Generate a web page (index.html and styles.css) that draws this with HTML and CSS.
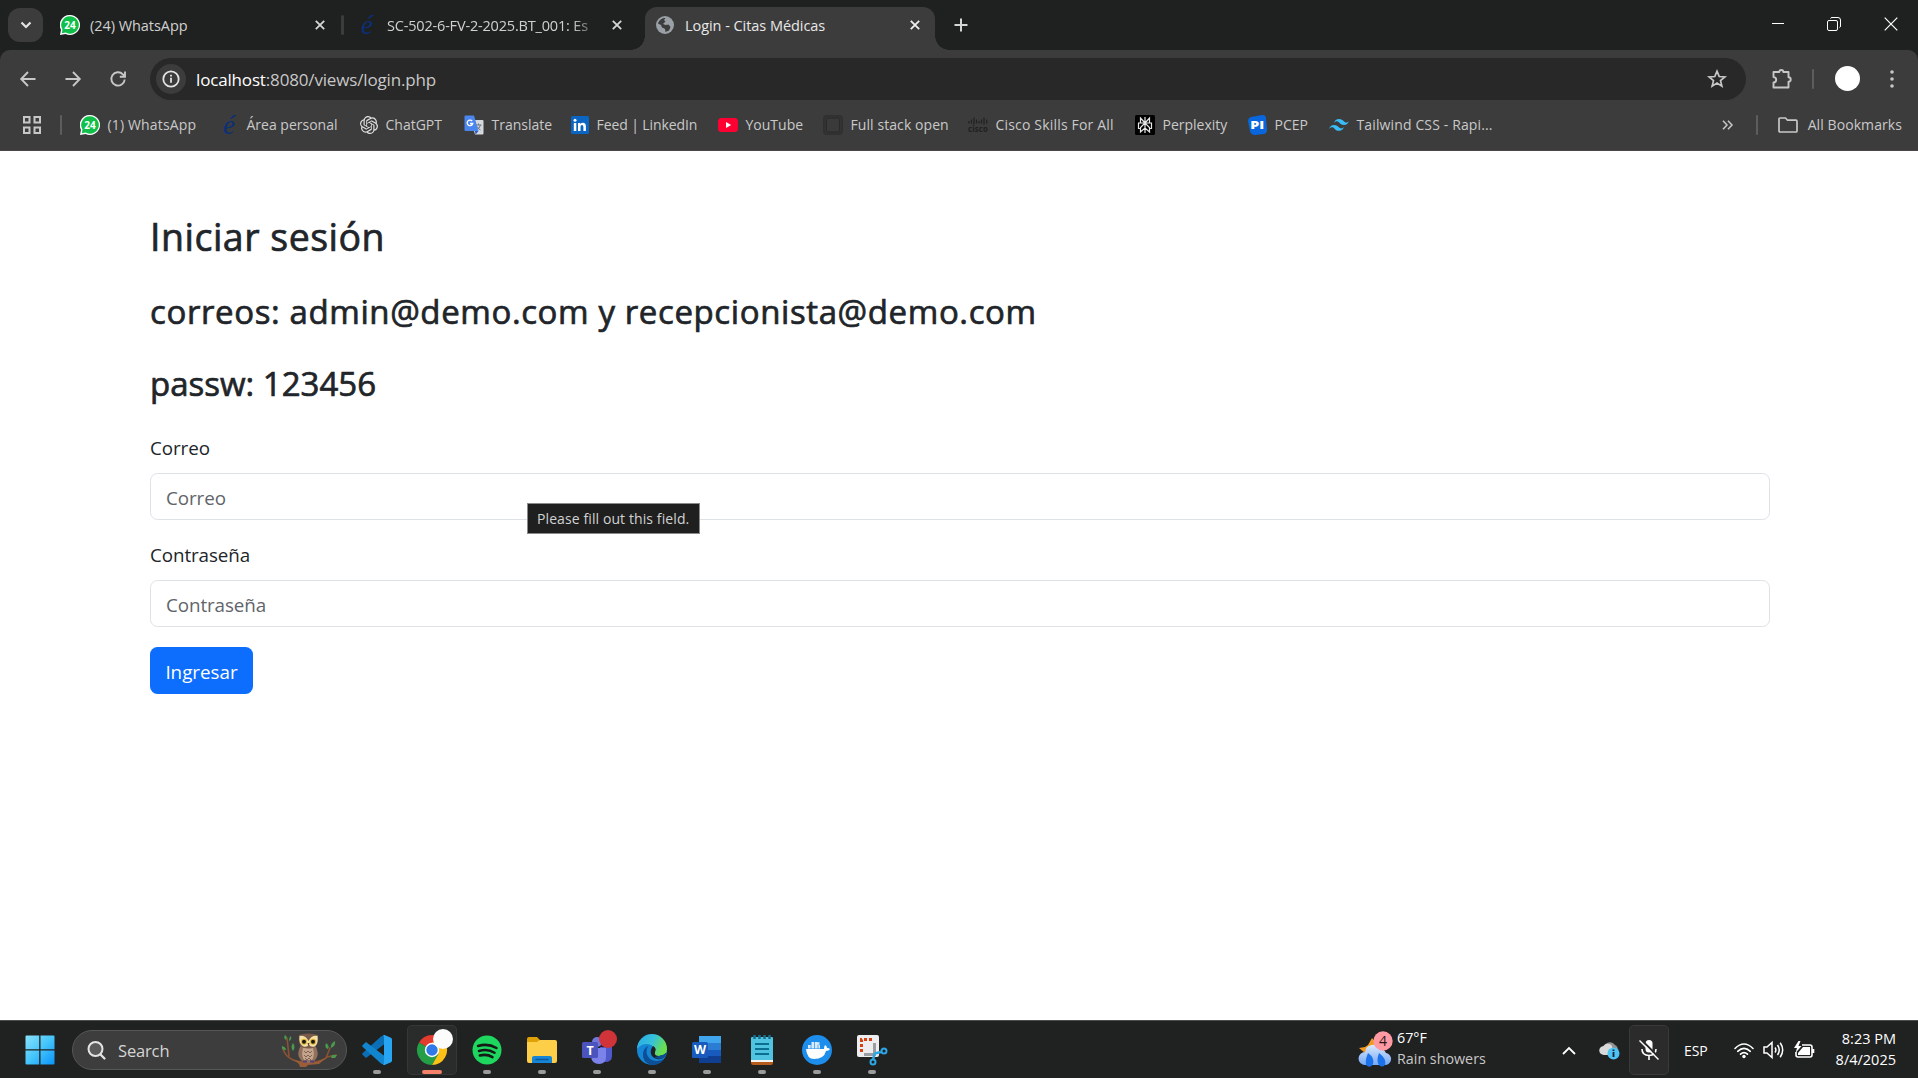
FILE: index.html
```html
<!DOCTYPE html>
<html lang="es">
<head>
<meta charset="utf-8">
<title>Login - Citas Médicas</title>
<link rel="stylesheet" href="styles.css">
</head>
<body>
<svg class="defs" aria-hidden="true">
  <symbol id="wa" viewBox="0 0 20 20"><path d="M10 0a10 10 0 1 1-4.5 18.900L0 20l1-5.200A10 10 0 0 1 10 0z" fill="#fff"/><path d="M10 1.300a8.700 8.700 0 1 1-4.300 16.200L1.800 18.300l.7-3.800A8.700 8.700 0 0 1 10 1.300z" fill="#0fbf4a"/><text x="10" y="13.600" text-anchor="middle" class="wa-num">24</text></symbol>
  <symbol id="x" viewBox="0 0 10 10"><path d="M.8.8l8.400 8.400M9.200.8L.8 9.200" stroke="currentColor" stroke-width="1.800" fill="none"/></symbol>
</svg>

<header class="tabs">
  <button class="tab-search"><svg width="12" height="8" viewBox="0 0 12 8"><path d="M1.500 1.500L6 6l4.500-4.500" fill="none" stroke="#e3e3e3" stroke-width="2.200"/></svg></button>
  <div class="tab tab-first">
    <svg width="20" height="20"><use href="#wa"/></svg>
    <span class="tab-title">(24) WhatsApp</span>
    <svg class="x" width="10" height="10"><use href="#x"/></svg>
  </div>
  <i class="tab-sep"></i>
  <div class="tab tab-second">
    <span class="e-logo">é</span>
    <span class="tab-title fade">SC-502-6-FV-2-2025.BT_001: Es</span>
    <svg class="x" width="10" height="10"><use href="#x"/></svg>
  </div>
  <div class="tab tab-active">
    <svg width="18" height="18" viewBox="0 0 18 18"><circle cx="9" cy="9" r="9" fill="#9aa0a6"/><path d="M2 7.500C3 4 6 2 9.500 2L8 4l1.500 1.500L7 8l2.500 1 3-.5 2 2.500-1.500 3.500-3.500 1.500-.5-3-3-1.500L5 9z" fill="#3c3c3c"/><path d="M9.500 5.500L13 4l1.500 3-3 1.500zM7 12l2 1.500L8 16z" fill="#9aa0a6"/></svg>
    <span class="tab-title">Login - Citas Médicas</span>
    <svg class="x" width="10" height="10"><use href="#x"/></svg>
  </div>
  <svg class="plus" width="14" height="14" viewBox="0 0 14 14"><path d="M7 .5v13M.5 7h13" stroke="#d5d5d5" stroke-width="2"/></svg>
  <div class="window-controls">
    <svg width="12" height="12" viewBox="0 0 12 12"><path d="M0 5.500h12" stroke="#fff"/></svg>
    <svg width="14" height="14" viewBox="0 0 14 14" fill="none" stroke="#fff"><rect x=".5" y="3.500" width="10" height="10" rx="1.500"/><path d="M3.500 1.500q.3-1 1.500-1h6q2.500 0 2.500 2.500v6q0 1.200-1 1.500"/></svg>
    <svg width="14" height="14" viewBox="0 0 14 14"><path d="M.7.7l12.600 12.600M13.300.7L.7 13.300" stroke="#fff" stroke-width="1.200"/></svg>
  </div>
</header>

<div class="toolbar-wrap">
<nav class="toolbar">
  <div class="nav-buttons">
    <svg width="16" height="16" viewBox="0 0 16 16"><path d="M15.500 8H1.500M8 1L1.200 8 8 15"/></svg>
    <svg width="16" height="16" viewBox="0 0 16 16"><path d="M.5 8h14M8 1l6.800 7L8 15"/></svg>
    <svg width="16" height="16" viewBox="0 0 16 16"><path d="M14.700 8.500a6.700 6.700 0 1 1-1.800-5.200L15 5.500M15 .5v5.200H9.800"/></svg>
  </div>
  <div class="omnibox">
    <span class="site-info"><svg width="18" height="18" viewBox="0 0 18 18"><circle cx="9" cy="9" r="7.700" fill="none" stroke="#e3e3e3" stroke-width="1.800"/><path d="M9 7.800v5M9 4.700v1.800" stroke="#e3e3e3" stroke-width="1.800"/></svg></span>
    <span class="url"><b>localhost</b>:8080/views/login.php</span>
    <svg class="star" width="20" height="20" viewBox="0 0 20 20"><path d="M10 2.200l2.200 5.300 5.700.4-4.400 3.700 1.400 5.500-4.900-3-4.900 3 1.400-5.500L2.100 7.900l5.700-.4z" fill="none" stroke="#c7c7c7" stroke-width="1.700"/></svg>
  </div>
  <svg class="puzzle" width="22" height="22" viewBox="0 0 22 22"><path d="M2.500 4h5.800a2 2 0 0 1 4 0h5.200v5.200a2.200 2.200 0 0 1 0 4.400V19.500h-15v-5a2.700 2.700 0 0 0 0-5.400z" fill="none" stroke="#c7c7c7" stroke-width="1.900" stroke-linejoin="round"/></svg>
  <i class="bar-sep"></i>
  <span class="avatar"></span>
  <svg class="dots" width="4" height="18" viewBox="0 0 4 18" fill="#c7c7c7"><circle cx="2" cy="2" r="1.800"/><circle cx="2" cy="9" r="1.800"/><circle cx="2" cy="16" r="1.800"/></svg>
</nav>
</div>

<nav class="bookmarks">
  <svg class="apps" width="18" height="18" viewBox="0 0 18 18" fill="none" stroke="#c7c7c7" stroke-width="2"><path d="M1 1h5.500v5.500H1zM11.500 1H17v5.500h-5.500zM1 11.500h5.500V17H1zM11.500 11.500H17V17h-5.500z"/></svg>
  <i class="bar-sep first-sep"></i>
  <a class="bm bm-wa"><svg width="20" height="20"><use href="#wa"/></svg><span>(1) WhatsApp</span></a>
  <a class="bm bm-area"><span class="e-logo">é</span><span>Área personal</span></a>
  <a class="bm bm-gpt"><svg width="18" height="18" viewBox="0 0 24 24" fill="#e0e0e0"><path d="M22.280 9.820a5.980 5.980 0 0 0-.52-4.910 6.050 6.050 0 0 0-6.510-2.900A6.070 6.070 0 0 0 4.980 4.180a5.980 5.980 0 0 0-4 2.900 6.050 6.050 0 0 0 .74 7.100 5.980 5.980 0 0 0 .51 4.910 6.050 6.050 0 0 0 6.510 2.900A5.980 5.980 0 0 0 13.260 24a6.060 6.060 0 0 0 5.770-4.210 5.990 5.990 0 0 0 4-2.900 6.060 6.060 0 0 0-.75-7.070zm-9.020 12.610a4.480 4.480 0 0 1-2.880-1.040l.14-.08 4.780-2.760a.8.8 0 0 0 .39-.68v-6.740l2.020 1.170a.07.07 0 0 1 .04.050v5.580a4.500 4.500 0 0 1-4.490 4.500zM3.600 18.300a4.470 4.470 0 0 1-.54-3.010l.14.090 4.780 2.760a.77.77 0 0 0 .78 0l5.840-3.370v2.330a.08.08 0 0 1-.03.060L9.740 19.950A4.500 4.500 0 0 1 3.600 18.300zM2.340 7.900a4.490 4.490 0 0 1 2.370-1.980V11.600a.77.77 0 0 0 .39.68l5.810 3.350-2.020 1.170a.08.08 0 0 1-.07 0l-4.830-2.790A4.500 4.500 0 0 1 2.340 7.900zm16.600 3.850l-5.840-3.390 2.020-1.160a.08.08 0 0 1 .07 0l4.830 2.790a4.490 4.490 0 0 1-.68 8.100v-5.680a.79.79 0 0 0-.4-.66zm2.010-3.020l-.14-.09-4.770-2.780a.78.78 0 0 0-.79 0L9.410 9.230V6.900a.07.07 0 0 1 .03-.06l4.830-2.790a4.500 4.500 0 0 1 6.680 4.660zM8.310 12.860l-2.020-1.160a.08.08 0 0 1-.04-.06V6.070a4.500 4.500 0 0 1 7.380-3.450l-.14.080-4.780 2.760a.8.8 0 0 0-.39.68zm1.100-2.370L12.010 9l2.610 1.500v3l-2.600 1.500-2.610-1.500z"/></svg><span>ChatGPT</span></a>
  <a class="bm bm-tr"><svg width="20" height="20" viewBox="0 0 20 20"><path d="M7 5h11.500q1 0 1 1v12.500q0 1-1 1H11z" fill="#d5d8dc"/><path d="M11.500 10h6M14.500 8.500V10M16.500 10q-1 3.500-4 5M13 11.500q1.500 2.500 3.500 3.500" fill="none" stroke="#6b7580"/><path d="M1.500.5H10l4.500 15.500h-13q-1 0-1-1v-13.500q0-1 1-1z" fill="#4a86ee"/><path d="M11 16h3.500L11.500 19.500z" fill="#2a56c6"/><path d="M8.200 6.200A2.800 2.800 0 1 0 8.700 8.500H6" fill="none" stroke="#fff" stroke-width="1.300"/></svg><span>Translate</span></a>
  <a class="bm bm-in"><svg width="18" height="18" viewBox="0 0 18 18"><rect width="18" height="18" rx="1.500" fill="#0a66c2"/><path d="M2.800 7h2.500v8H2.800zM7 7h2.400v1.200q.8-1.400 2.500-1.400 3 0 3 3.700V15h-2.500v-4q0-2-1.400-2-1.500 0-1.500 2v4H7z" fill="#fff"/><circle cx="4" cy="4.300" r="1.500" fill="#fff"/></svg><span>Feed | LinkedIn</span></a>
  <a class="bm bm-yt"><svg width="20" height="14" viewBox="0 0 20 14"><rect width="20" height="14" rx="3.500" fill="#ff0033"/><path d="M8 4l5.200 3L8 10z" fill="#fff"/></svg><span>YouTube</span></a>
  <a class="bm bm-fs"><svg width="20" height="20" viewBox="0 0 20 20"><rect x=".8" y=".8" width="18.400" height="18.400" rx="3" fill="#343434" stroke="#303030" stroke-width="1.500"/><rect x="3.500" y="3" width="13" height="14" rx="1.500" fill="#3a3a3a" stroke="#292929"/></svg><span>Full stack open</span></a>
  <a class="bm bm-ci"><svg width="20" height="16" viewBox="0 0 20 16"><path d="M1 4v2.500M3.500 2.500v4M6 .5v7M8.500 2.500v4M11 4v2.500M13.500 2.500v4M16 .5v7M18.700 2.500v4" stroke="#202020" stroke-width="1.200"/><text x="0" y="15" textLength="20" lengthAdjust="spacingAndGlyphs" class="cisco">cisco</text></svg><span>Cisco Skills For All</span></a>
  <a class="bm bm-px"><svg width="20" height="20" viewBox="0 0 20 20"><rect width="20" height="20" rx="1.500" fill="#000"/><path d="M10 2v16M5.500 3l4.500 5 4.500-5v5h-9zM5.500 8H3.500v5.500h2M14.500 8h2v5.500h-2M10 8l-4.500 4.500V17l4.500-4 4.500 4v-4.500z" fill="none" stroke="#e8e8e8" stroke-width="1.200"/></svg><span>Perplexity</span></a>
  <a class="bm bm-pc"><svg width="19" height="20" viewBox="0 0 19 20"><path d="M3 2l11-2q4 0 4 3l1 12q0 3-3 4l-9 1q-4 0-5-4L0 6q0-3 3-4z" fill="#0a66dc"/><text x="2.300" y="13.700" textLength="14" lengthAdjust="spacingAndGlyphs" class="pi">PI</text></svg><span>PCEP</span></a>
  <a class="bm bm-tw"><svg width="20" height="12" viewBox="0 0 54 33" fill="#38bdf8"><path d="M27 0c-7.200 0-11.700 3.600-13.500 10.800 2.700-3.600 5.850-4.950 9.450-4.050 2.050.51 3.520 2 5.150 3.650C30.740 13.100 33.800 16.200 40.500 16.200c7.200 0 11.700-3.600 13.500-10.800-2.700 3.600-5.850 4.950-9.450 4.050-2.050-.51-3.520-2-5.150-3.650C36.760 3.100 33.700 0 27 0zM13.500 16.200C6.300 16.200 1.800 19.800 0 27c2.700-3.600 5.850-4.950 9.450-4.050 2.050.51 3.520 2 5.150 3.650 2.640 2.700 5.700 5.800 12.400 5.800 7.200 0 11.700-3.600 13.500-10.800-2.700 3.600-5.850 4.950-9.450 4.050-2.050-.51-3.520-2-5.150-3.650-2.640-2.700-5.700-5.800-12.400-5.800z"/></svg><span>Tailwind CSS - Rapi...</span></a>
  <div class="bm-right">
    <svg width="11" height="10" viewBox="0 0 11 10"><path d="M1 .7L5 5 1 9.300M6 .7L10 5 6 9.300" fill="none" stroke="#c7c7c7" stroke-width="1.500"/></svg>
    <i class="bar-sep"></i>
    <svg width="20" height="16" viewBox="0 0 20 16"><path d="M1 2q0-1 1-1h5.500l2 2.200H18q1 0 1 1V14q0 1-1 1H2q-1 0-1-1z" fill="none" stroke="#c7c7c7" stroke-width="1.700"/></svg>
    <span>All Bookmarks</span>
  </div>
</nav>

<main class="page">
  <h2>Iniciar sesión</h2>
  <h3 class="mails">correos: admin@demo.com y recepcionista@demo.com</h3>
  <h3 class="pass">passw: 123456</h3>
  <form>
    <div class="field">
      <label for="correo">Correo</label>
      <input id="correo" type="email" placeholder="Correo">
      <div class="tooltip">Please fill out this field.</div>
    </div>
    <div class="field">
      <label for="clave">Contraseña</label>
      <input id="clave" type="password" placeholder="Contraseña">
    </div>
    <button type="button" class="submit">Ingresar</button>
  </form>
</main>

<footer class="taskbar">
  <svg class="start" width="30" height="30" viewBox="0 0 30 30"><defs><linearGradient id="win" x2="1" y2="1"><stop stop-color="#8be2fb"/><stop offset=".5" stop-color="#45c5fb"/><stop offset="1" stop-color="#0a93fa"/></linearGradient></defs><path d="M1.500.5h12.700v13.700H.5V1.500q0-1 1-1zM15.500.5h13q1 0 1 1v12.700h-14zM.5 15.500h13.700v14H1.500q-1 0-1-1zM15.500 15.500h14v13q0 1-1 1h-13z" fill="url(#win)"/></svg>
  <div class="search">
    <svg width="19" height="19" viewBox="0 0 19 19"><circle cx="8.500" cy="8" r="7" fill="#5b5b5b" stroke="#e4e4e4" stroke-width="2"/><path d="M13.500 13.500l4 4" stroke="#e4e4e4" stroke-width="2.300" stroke-linecap="round"/></svg>
    <span>Search</span>
    <svg class="owl" width="58" height="34" viewBox="0 0 58 34"><path d="M2 16q2 7 10 11 6 2 9 2M8 23L6 5M33 29q9-1 13-5l9-2M45 25l4-10" fill="none" stroke="#8a5233" stroke-width="1.600" stroke-linecap="round"/><path d="M12 26q8 4 24 3l10-5-8 7-11 1-2 2h-6l-1-3z" fill="#9a5d38"/><path d="M20 12q-5 9-1 14 3 4 8 4t8-4q4-5-1-14z" fill="#91705c"/><path d="M22 15q-2 8 1 12h8q3-4 1-12z" fill="#c3a48d"/><path d="M23 18l2 2 2-2 2 2 2-2M23 22l2 2 2-2 2 2 2-2M24 25l2 2 2-2 2 2" stroke="#82614e" fill="none"/><path d="M18 2q9-3 19 0 1 9-3 12-6 3-13 0-4-3-3-12z" fill="#7a5a49"/><path d="M18.500 3q6-1 9 5 3-6 9-5 1 8-3 10.500-4 1-5.500-2-2 3-5.500 2-5-2.500-4-10.500z" fill="#f3dfa8"/><circle cx="23" cy="8.700" r="3" fill="#e3b72c"/><circle cx="32" cy="8.700" r="3" fill="#e3b72c"/><circle cx="23" cy="8.700" r="2" fill="#1c1a18"/><circle cx="32" cy="8.700" r="2" fill="#1c1a18"/><path d="M26.500 10h2l-1 3.500z" fill="#5b4636"/><path d="M22 28.500h4M29 28.500h4" stroke="#54407a" stroke-width="2"/><path d="M4 2q3 2 1 5-3-2-1-5zM10 3q1 4-2 5 0-4 2-5zM1 13q4 1 4 4-5 0-4-4zM12 10q3 4 0 8-3-4 0-8zM45 10q4 3 2 6-4-1-2-6zM54 8q1 5-4 7-1-4 4-7zM51 22h5l-2 3h-4z" fill="#4a9a4b"/></svg>
  </div>
  <div class="apps-row">
    <div class="app"><svg width="32" height="32" viewBox="0 0 32 32"><path d="M23.500 8v2L5 24l-3.500-3.200q-.5-.8 0-1.600L20 2.500 23.500 1z" fill="#0b6fb5"/><path d="M23.500 24v7L20 29.500 1.500 12.800q-.5-.8 0-1.600L5 8l18.500 14z" fill="#1285cf"/><path d="M23.500 1L30 3.800q1 .5 1 1.700v21q0 1.200-1 1.700L23.500 31q-1 .3-1.800-.5 1.300.3 1.300-1.500V3q0-1.800-1.300-1.500.8-.8 1.800-.5z" fill="#27a5f2"/></svg><i></i></div>
    <div class="app current"><svg width="32" height="32" viewBox="0 0 32 32"><path d="M16 16L3 8.500A15 15 0 0 1 29 8.500z" fill="#e33b2e"/><path d="M16 16L3 8.500A15 15 0 0 0 16 31l6.500-11.200z" fill="#259f47"/><path d="M16 16V8.500h13A15 15 0 0 1 16 31l6.500-11.200z" fill="#fbc116"/><circle cx="16" cy="16" r="7.200" fill="#fff"/><circle cx="16" cy="16" r="5.700" fill="#3178e8"/></svg><i></i><span class="badge white"></span></div>
    <div class="app"><svg width="32" height="32" viewBox="0 0 32 32"><circle cx="16" cy="16" r="14.500" fill="#1ed75f"/><path d="M7 12q10-3 18.500 2M8 17q9-2.500 15.500 1.800M8.800 21.500q7-1.800 12.700 1.600" fill="none" stroke="#151a17" stroke-width="2.500" stroke-linecap="round"/></svg><i></i></div>
    <div class="app"><svg width="32" height="32" viewBox="0 0 32 32"><path d="M1 5q0-2 2-2h8l3 3h-1v6H1z" fill="#e0a008"/><path d="M1 8h10l2.500-2H29q2 0 2 2v19q0 2-2 2H3q-2 0-2-2z" fill="#fdce48"/><path d="M6 29v-5q0-2 2-2h16q2 0 2 2v5z" fill="#1785d6"/><path d="M10 25.500h12" stroke="#09599c" stroke-width="1.500" stroke-linecap="round"/></svg><i></i></div>
    <div class="app"><svg width="32" height="32" viewBox="0 0 32 32"><circle cx="16" cy="8" r="5" fill="#7076dc"/><path d="M19 13h12v9q0 6-7 6h-5z" fill="#5059c9"/><path d="M11 14h14v9q0 7-7 7t-8-7z" fill="#7b83eb"/><rect x="1" y="8" width="16" height="16" rx="1.500" fill="#4b53bc"/><text x="9" y="20.500" text-anchor="middle" class="tile">T</text></svg><i></i><span class="badge red"></span></div>
    <div class="app"><svg width="32" height="32" viewBox="0 0 32 32"><defs><linearGradient id="edge" x2="1" y2=".4"><stop stop-color="#28a8e8"/><stop offset=".55" stop-color="#35c1da"/><stop offset="1" stop-color="#6be04b"/></linearGradient></defs><circle cx="16" cy="16" r="15" fill="#1585d5"/><path d="M1 15A15 15 0 0 1 31 15q0 7-8 7-6 0-4-4 1-5-4-7Q7 8 1 15z" fill="url(#edge)"/><path d="M12 12q-4 7 2 13 6 4 14 0-5 7-13 6Q6 28 7 19q1-5 5-7z" fill="#0c4f96"/><path d="M17 12q4 2 2 6-1 4 4 4 4 0 7-3-1 5-5 6-8 1-10-5-1-4 2-8z" fill="#202121"/><path d="M23 22q4 0 7-3-1 5-5 6-4 0-7-2 3 0 5-1z" fill="#0c4f96"/></svg><i></i></div>
    <div class="app"><svg width="32" height="32" viewBox="0 0 32 32"><path d="M8 2h22v8H8z" fill="#41a5ee"/><path d="M8 9h22v7H8z" fill="#2b7cd3"/><path d="M8 16h22v7H8z" fill="#185abd"/><path d="M8 22h22v7H8z" fill="#103f91"/><rect x="1" y="8" width="16" height="16" rx="1.500" fill="#185abd"/><text x="9" y="20" text-anchor="middle" class="tile">W</text></svg><i></i></div>
    <div class="app"><svg width="32" height="32" viewBox="0 0 32 32"><rect x="5" y="3" width="22" height="25" rx="1" fill="#50c3e0"/><path d="M5 26h22v2H5z" fill="#f4f4f4"/><path d="M5 28h22v1q0 2-2 2H7q-2 0-2-2z" fill="#b35c1c"/><path d="M9 10h14M9 15h14M9 20h14" stroke="#0b6f92" stroke-width="2"/><path d="M8.500 1v4M13.500 1v4M18.500 1v4M23.500 1v4" stroke="#176f8d" stroke-width="2.500"/></svg><i></i></div>
    <div class="app"><svg width="32" height="32" viewBox="0 0 32 32"><circle cx="16" cy="16" r="15" fill="#1d8eec"/><path d="M5 15h18q0-2 1-4 2 1 2 3 2 0 3 1-1 2-4 2-2 8-12 8Q6 25 5 15z" fill="#fff"/><path d="M7 11h12v3.500H7zM10.500 8h6v3h-6zM16 8.200h2.500v2.500H16z" fill="#d9ebfb"/><path d="M10 11v4M13.500 8v7M17 11v4" stroke="#1d8eec" stroke-width=".7"/></svg><i></i></div>
    <div class="app"><svg width="32" height="32" viewBox="0 0 32 32"><rect x="1" y="1" width="22" height="22" rx="2" fill="#eeeef0"/><path d="M5.500 18V5.500H17" fill="none" stroke="#d8400f" stroke-width="3" stroke-dasharray="3 2"/><path d="M18.500 9v11.500H8" fill="none" stroke="#9a9da2" stroke-width="3"/><path d="M18.500 19.500L25 18M18.500 19.500L17 26" stroke="#2ba6e6" stroke-width="2.500"/><circle cx="28" cy="17" r="2.500" fill="none" stroke="#2ba6e6" stroke-width="2"/><circle cx="17" cy="28" r="2.500" fill="none" stroke="#2ba6e6" stroke-width="2"/></svg><i></i></div>
  </div>
  <div class="weather">
    <svg width="36" height="42" viewBox="0 0 36 42"><defs><linearGradient id="cl" x2="0" y2="1"><stop stop-color="#dbe9fd"/><stop offset="1" stop-color="#75a8f5"/></linearGradient></defs><path d="M14 9l5 6 8 1-8 14H9l-2-6-6-5 6-1 3-2z" fill="#f29a1e"/><path d="M7 36a6.500 6.500 0 0 1 0-13 8 8 0 0 1 15-3 7 7 0 0 1 6 4 6 6 0 0 1-2 12z" fill="url(#cl)"/><path d="M10 24q7 5 5 11-2 4-6 2-3-3 1-13zM21 24q8 6 6 12-3 3-6 0-3-4 0-12z" fill="#1b72ea"/><circle cx="25" cy="12" r="9.700" fill="#ff99a4"/><text x="25" y="17" text-anchor="middle" class="count">4</text></svg>
    <div class="weather-text"><span class="temp">67°F</span><span class="cond">Rain showers</span></div>
  </div>
  <div class="tray">
    <svg class="chev" width="14" height="9" viewBox="0 0 14 9"><path d="M1 8l6-6 6 6" fill="none" stroke="#fff" stroke-width="1.800"/></svg>
    <svg class="cloud" width="21" height="20" viewBox="0 0 21 20"><path d="M5 8a6 6 0 0 1 11-3q3 1 3 6H5z" fill="#929292"/><path d="M5 15a4.500 4.500 0 0 1-.5-9A5 5 0 0 1 13 6l1 9z" fill="#d9d9d9"/><circle cx="14.500" cy="13.500" r="6" fill="#4cc2f5"/><path d="M14.500 12v5M14.500 9.500v1.500" stroke="#123" stroke-width="1.800"/></svg>
    <span class="mic"><svg width="22" height="22" viewBox="0 0 22 22"><rect x="7.500" y="1" width="7" height="12.500" rx="3.500" fill="#fff"/><path d="M4 10q0 6.500 7 6.500t7-6.500M11 16.500V21" fill="none" stroke="#fff" stroke-width="1.600"/><path d="M2.500 0l19 19" stroke="#2b2b2b" stroke-width="2"/><path d="M1.500 1.500l19 19" stroke="#fff" stroke-width="1.500"/></svg></span>
    <span class="lang">ESP</span>
    <svg class="wifi" width="20" height="17" viewBox="0 0 20 17"><path d="M1 6.500q9-9 18 0M3.700 9.300q6.300-6 12.600 0M6.500 12.200q3.500-3.300 7 0" fill="none" stroke="#fff" stroke-width="1.600" stroke-linecap="round"/><circle cx="10" cy="14.500" r="1.700" fill="#fff"/></svg>
    <svg class="vol" width="21" height="18" viewBox="0 0 21 18" fill="none" stroke="#fff" stroke-width="1.500"><path d="M1 6h3l5-4.500v15L4 12H1zM12 6.500q1.800 2.500 0 5M14.500 4q3.500 5 0 10M17.200 1.800q5 7.200 0 14.400"/></svg>
    <svg class="bat" width="21" height="18" viewBox="0 0 21 18"><path d="M8 4h8q2 0 2 2v8q0 2-2 2H4q-2 0-2-2v-3M19.500 8v4" fill="none" stroke="#fff" stroke-width="1.600"/><path d="M9 6h7v8H4v-2z" fill="#fff"/><path d="M4.500 0L0 7h3l-1.500 5L7.500 5h-3L6.500 0z" fill="#fff"/></svg>
    <div class="clock"><span class="time">8:23 PM</span><span class="date">8/4/2025</span></div>
  </div>
</footer>
</body>
</html>
```
FILE: styles.css
```css
* { box-sizing: border-box; }
body {
  margin: 0;
  width: 1918px;
  height: 1078px;
  overflow: hidden;
  display: flex;
  flex-direction: column;
  background: #fff;
  font-family: "Open Sans", "Noto Sans", sans-serif;
  font-size: 14px;
  color: #e3e3e3;
}
svg { flex: none; display: block; overflow: visible; }
i { flex: none; display: block; }
span { white-space: nowrap; }
.defs { position: absolute; width: 0; height: 0; }
.wa-num { font: 700 10px "Open Sans", sans-serif; fill: #fff; }
.cisco { font: 700 9px "Open Sans", sans-serif; fill: #202020; }
.pi { font: 800 10px "Open Sans", sans-serif; fill: #fff; }
.tile { font: 700 12.500px "Open Sans", sans-serif; fill: #fff; }
.count { font: 14px "Open Sans", sans-serif; fill: #2b1517; }
.e-logo { width: 20px; text-align: center; font: italic 27px/20px "Liberation Serif", serif; color: #0b2f78; }

/* Tab strip */
.tabs { height: 50px; flex: none; display: flex; background: #1f2120; padding-left: 8px; }
.tab-search {
  width: 35px; height: 34px; margin: 8px 16px 0 0; padding: 0; border: 0; border-radius: 12px;
  background: #3c3c3c; display: flex; align-items: center; justify-content: center;
}
.tab { height: 50px; display: flex; align-items: center; }
.tab-title { flex: 1; font-size: 14.500px; color: #d0d0d0; letter-spacing: -.05px; }
.x { color: #d6d6d6; }
.tab-first { width: 266px; gap: 10px; padding-left: 1px; }
.tab-sep { width: 3px; height: 20px; margin: 15px 13px 0 16px; background: #3c3c3c; border-radius: 2px; }
.tab-second { width: 265px; gap: 10px; }
.tab-second .tab-title { letter-spacing: -.18px; }
.tab-second .x { margin-left: 8px; }
.fade { -webkit-mask-image: linear-gradient(90deg, #000 185px, transparent 215px); mask-image: linear-gradient(90deg, #000 185px, transparent 215px); }
.tab-active {
  position: relative; width: 290px; height: 43px; margin: 7px 0 0 23px; padding: 0 15px 7px 11px; gap: 11px;
  background: #3c3c3c; border-radius: 12px 12px 0 0;
}
.tab-active .tab-title { color: #e8e8e8; }
.tab-active .x { color: #f0f0f0; }
.tab-active::before, .tab-active::after {
  content: ""; position: absolute; bottom: 0; width: 14px; height: 14px;
}
.tab-active::before { left: -14px; background: radial-gradient(circle at 0 0, transparent 13.500px, #3c3c3c 14px); }
.tab-active::after { right: -14px; background: radial-gradient(circle at 100% 0, transparent 13.500px, #3c3c3c 14px); }
.plus { margin: 18px 0 0 19px; }
.window-controls { margin-left: auto; padding: 0 20px 2px 0; display: flex; align-items: center; gap: 43px; }

/* Toolbar */
.toolbar-wrap { flex: none; background: #1f2120; }
.toolbar { height: 50px; display: flex; align-items: center; background: #3c3c3c; padding: 8px 24px 0 20px; border-radius: 10px 10px 0 0; }
.nav-buttons { width: 130px; display: flex; gap: 29px; fill: none; stroke: #c7c7c7; stroke-width: 1.900; }
.omnibox { width: 1596px; height: 42px; border-radius: 21px; background: #282828; display: flex; align-items: center; padding: 0 19px 0 6px; }
.site-info { width: 30px; height: 30px; border-radius: 50%; background: #3c3c3c; display: grid; place-items: center; }
.url { margin-left: 10px; font-size: 17px; letter-spacing: -.16px; color: #c7c7c7; }
.url b { font-weight: 400; color: #fff; }
.star { margin-left: auto; }
.puzzle { margin-left: 25px; }
.bar-sep { width: 2px; height: 20px; border-radius: 1px; background: #5d5d5d; }
.toolbar .bar-sep { margin-left: 19px; }
.avatar { flex: none; width: 25px; height: 25px; border-radius: 50%; background: #fff; margin-left: 21px; position: relative; top: -1px; }
.dots { margin-left: auto; margin-right: 0; }

/* Bookmarks bar */
.bookmarks { height: 51px; flex: none; display: flex; align-items: center; background: #3c3c3c; padding-left: 23px; padding-bottom: 1px; font-size: 14px; color: #c9c9c9; border-bottom: 1px solid #4b4747; }
.first-sep { margin: 0 18px 0 19px; }
.bm { flex: none; display: flex; align-items: center; }
.bm > :first-child { margin-right: 7.500px; }
.bm-wa { width: 139px; letter-spacing: .15px; }
.bm-area { width: 141px; }
.bm-gpt { width: 104px; }
.bm-tr { width: 107px; }
.bm-in { width: 147px; letter-spacing: -.1px; }
.bm-yt { width: 105px; }
.bm-fs { width: 145px; letter-spacing: .08px; }
.bm-ci { width: 167px; letter-spacing: .18px; }
.bm-px { width: 113px; }
.bm-pc { width: 81px; }
.bm-tw { letter-spacing: .13px; }
.bm-right { margin-left: auto; padding-right: 16px; display: flex; align-items: center; letter-spacing: .08px; }
.bm-right .bar-sep { margin: 0 20px 0 23px; }
.bm-right span { margin-left: 10px; }

/* Login page */
.page { flex: 1; padding: 62px 148px 0 150px; color: #212529; font-size: 18.800px; }
h2, h3 { margin: 0; font-weight: 500; white-space: nowrap; -webkit-text-stroke: .7px #212529; }
h2 { font-size: 37.500px; height: 48px; line-height: 48px; margin-bottom: 30px; letter-spacing: .5px; }
h3 { font-size: 33px; height: 42px; line-height: 42px; margin-bottom: 30px; }
.mails { letter-spacing: .61px; }
.pass { margin-bottom: 28px; }
.field { position: relative; margin-bottom: 20px; }
label { display: block; height: 30px; line-height: 30px; margin-bottom: 10px; letter-spacing: -.08px; }
input {
  display: block; width: 100%; height: 47px; padding: 3px 15px 0; border: 1px solid #dee2e6; border-radius: 7.500px;
  font: inherit; letter-spacing: -.08px; background: #fff; color: #212529; outline: 0;
}
input::placeholder { color: #5f6469; opacity: 1; }
.tooltip {
  position: absolute; left: 377px; top: 70px; width: 173px; height: 31px; padding-left: 9px;
  border: 1px solid #8a8a8a; background: #1f1f1f; color: #d2d2d2; font-size: 14px; letter-spacing: .1px; line-height: 29px; white-space: nowrap;
}
.submit { display: block; width: 103px; height: 47px; padding: 3px 0 0; border: 0; border-radius: 7.500px; background: #0d6efd; color: #fff; font: inherit; }

/* Taskbar */
.taskbar { height: 58px; flex: none; display: flex; align-items: center; background: #202121; border-top: 1px solid #4a4d4c; padding: 1px 22px 0 26px; color: #fff; }
.start { margin-left: -1px; }
.search { width: 275px; height: 40px; margin-left: 17px; padding: 0 7px 0 14px; border: 1px solid #565656; border-radius: 20px; background: #3d3d3d; display: flex; align-items: center; color: #d5d5d5; font-size: 16.500px; }
.search span { margin-left: 12px; letter-spacing: -.15px; }
.owl { margin-left: auto; }
.apps-row { display: flex; gap: 5px; margin-left: 5px; }
.app { position: relative; width: 50px; height: 50px; display: grid; place-items: center; border-radius: 5px; }
.app i { position: absolute; bottom: 1px; left: 21px; width: 8px; height: 4px; border-radius: 2px; background: #9b9b9b; }
.app.current { background: #2a2b2b; box-shadow: inset 0 0 0 1px #353636; }
.app.current i { left: 15px; width: 20px; background: #f5816b; }
.badge { position: absolute; border-radius: 50%; }
.white { width: 20px; height: 20px; left: 26px; top: 4px; background: #fcfcfc; }
.red { width: 18px; height: 18px; left: 27px; top: 5px; background: #d13438; }
.weather { display: flex; margin-left: auto; width: 204px; }
.weather-text { display: flex; flex-direction: column; margin: -1px 0 0 3px; font-size: 14.300px; line-height: 20.500px; }
.cond { color: #c8c8c8; }
.tray { display: flex; align-items: center; }
.cloud { margin-left: 23px; }
.mic { width: 40px; height: 50px; margin-left: 9px; border: 1px solid #3a3a3a; border-radius: 5px; background: #2b2b2b; display: grid; place-items: center; }
.lang { width: 25px; margin-left: 15px; font-size: 14px; letter-spacing: -.1px; }
.wifi { margin-left: 25px; }
.vol { margin-left: 9px; }
.bat { margin-left: 10px; }
.clock { width: 81px; display: flex; flex-direction: column; align-items: flex-end; margin-top: -1px; font-size: 14.500px; line-height: 20.500px; }
```
